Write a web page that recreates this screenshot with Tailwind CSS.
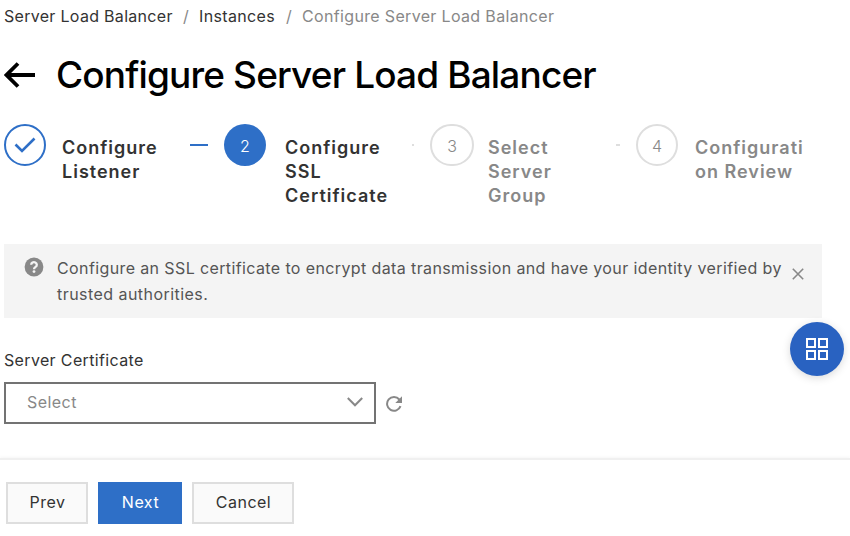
<!DOCTYPE html>
<html lang="en">
<head>
<meta charset="utf-8">
<title>Configure Server Load Balancer</title>
<script src="https://cdn.jsdelivr.net/npm/@tailwindcss/browser@4"></script>
</head>
<body class="relative flex h-[536px] w-[850px] flex-col overflow-hidden bg-white font-['Inter',sans-serif] text-base text-[#333]">
<main class="h-[458px] shrink-0 pl-1">
  <nav class="flex h-8 items-center leading-8 whitespace-nowrap">
    <a class="w-[179px] tracking-[0.3px]">Server Load Balancer</a>
    <span class="w-4 text-[#888]">/</span>
    <a class="w-[87px] tracking-[0.35px]">Instances</a>
    <span class="w-4 text-[#888]">/</span>
    <span class="tracking-[0.34px] text-[#888]">Configure Server Load Balancer</span>
  </nav>
  <header class="mt-4 flex h-[54px] items-center text-black">
    <svg class="h-8 w-[52px] shrink-0" viewBox="0 0 52 32" fill="none" stroke="currentColor" stroke-width="3.8"><path d="M31 16H3M14 4.5L2.5 16 14 27.5"/></svg>
    <h1 class="text-[37px] font-medium tracking-[-0.85px] whitespace-nowrap">Configure Server Load Balancer</h1>
  </header>
  <ol class="mt-[22px] flex h-[120px] items-start text-lg leading-6 font-semibold tracking-[1px] whitespace-nowrap">
    <li class="flex w-[220px]">
      <span class="flex size-[42px] shrink-0 items-center justify-center rounded-full border-2 border-[#2e6fc7]">
        <svg class="h-[18px] w-6" viewBox="0 0 24 18" fill="none" stroke="#2e6fc7" stroke-width="2.6"><path d="M2.5 8.5L9 15 21.5 2.5"/></svg>
      </span>
      <span class="mt-3 ml-4 w-[128px]">Configure<br>Listener</span>
      <i class="mt-5 h-0.5 w-[18px] bg-[#2e6fc7]"></i>
    </li>
    <li class="flex w-[206px]">
      <span class="flex size-[42px] shrink-0 items-center justify-center rounded-full bg-[#2e6fc7] pt-px text-base font-light tracking-normal text-white">2</span>
      <span class="mt-3 ml-[19px] w-[127px]">Configure<br>SSL<br>Certificate</span>
      <i class="mt-5 h-0.5 w-0.5 bg-[#dedede]"></i>
    </li>
    <li class="flex w-[206px] text-[#888]">
      <span class="flex h-[42px] w-11 shrink-0 items-center justify-center rounded-full border-2 border-[#dedede] pt-px text-base font-light tracking-normal">3</span>
      <span class="mt-3 ml-[14px] w-[128px]">Select<br>Server<br>Group</span>
      <i class="mt-5 h-0.5 w-1 bg-[#dedede]"></i>
    </li>
    <li class="flex text-[#888]">
      <span class="flex size-[42px] shrink-0 items-center justify-center rounded-full border-2 border-[#dedede] pt-px text-base font-light tracking-normal">4</span>
      <span class="mt-3 ml-[17px]">Configurati<br>on Review</span>
    </li>
  </ol>
  <section class="flex h-[74px] w-[818px] items-start bg-[#f4f4f4] text-[#555]">
    <svg class="mt-[13px] ml-5 size-5 shrink-0" viewBox="0 0 20 20"><circle cx="10" cy="10" r="9.4" fill="#888"/><path d="M7.2 7.8a2.8 2.6 0 1 1 4.4 2.1Q10 11 10 12.3" fill="none" stroke="#f4f4f4" stroke-width="2.3"/><circle cx="10" cy="14.6" r="1.4" fill="#f4f4f4"/></svg>
    <p class="mt-[11px] ml-[13px] w-[735px] leading-[26px] whitespace-nowrap"><span class="tracking-[0.385px]">Configure an SSL certificate to encrypt data transmission and have your identity verified by</span><br><span class="tracking-[0.45px]">trusted authorities.</span></p>
    <svg class="mt-6 size-3 shrink-0" viewBox="0 0 12 12" fill="none" stroke="#888" stroke-width="1.6"><path d="M.8.8l10.4 10.4M11.2.8L.8 11.2"/></svg>
  </section>
  <label class="mt-[30px] block leading-6 tracking-[0.35px]">Server Certificate</label>
  <div class="mt-[10px] flex items-center">
    <div class="flex h-[42px] w-[372px] items-center justify-between border-2 border-[#737373] pr-[11px] pb-0.5 pl-[21px] text-[#888]">
      <span class="tracking-[0.45px]">Select</span>
      <svg class="h-2.5 w-4" viewBox="0 0 16 10" fill="none" stroke="#888" stroke-width="2"><path d="M.8 1L8 8.3 15.2 1"/></svg>
    </div>
    <svg class="mt-0.5 ml-2.5 size-4" viewBox="0 0 16 16"><path d="M14.5 10.2A6.9 6.9 0 1 1 13.3 3.5" fill="none" stroke="#888" stroke-width="2"/><path d="M16 .3V7H9.3z" fill="#888"/></svg>
  </div>
</main>
<footer class="flex h-[78px] shrink-0 items-start gap-2.5 border-t-2 border-[#f0f0f0] bg-white pt-[22px] pl-1.5 tracking-[0.5px] shadow-[0_-1px_3px_rgba(0,0,0,0.04)]">
  <button class="h-[42px] w-[82px] border-2 border-[#dedede] bg-[#fafafa] pb-0.5 pl-px">Prev</button>
  <button class="h-[42px] w-[84px] bg-[#2e6fc7] pb-0.5 pl-px text-white">Next</button>
  <button class="h-[42px] w-[102px] border-2 border-[#dedede] bg-[#fafafa] pb-0.5 pl-px">Cancel</button>
</footer>
<button class="absolute top-[322px] left-[790px] flex size-[54px] items-center justify-center rounded-full bg-[#2962c1] shadow-[0_2px_8px_rgba(0,0,0,0.15)]">
  <svg class="size-[22px]" viewBox="0 0 22 22" fill="none" stroke="#fff" stroke-width="2"><path d="M1 1h8v8H1zM13 1h8v8h-8zM1 13h8v8H1zM13 13h8v8h-8z"/></svg>
</button>
</body>
</html>
